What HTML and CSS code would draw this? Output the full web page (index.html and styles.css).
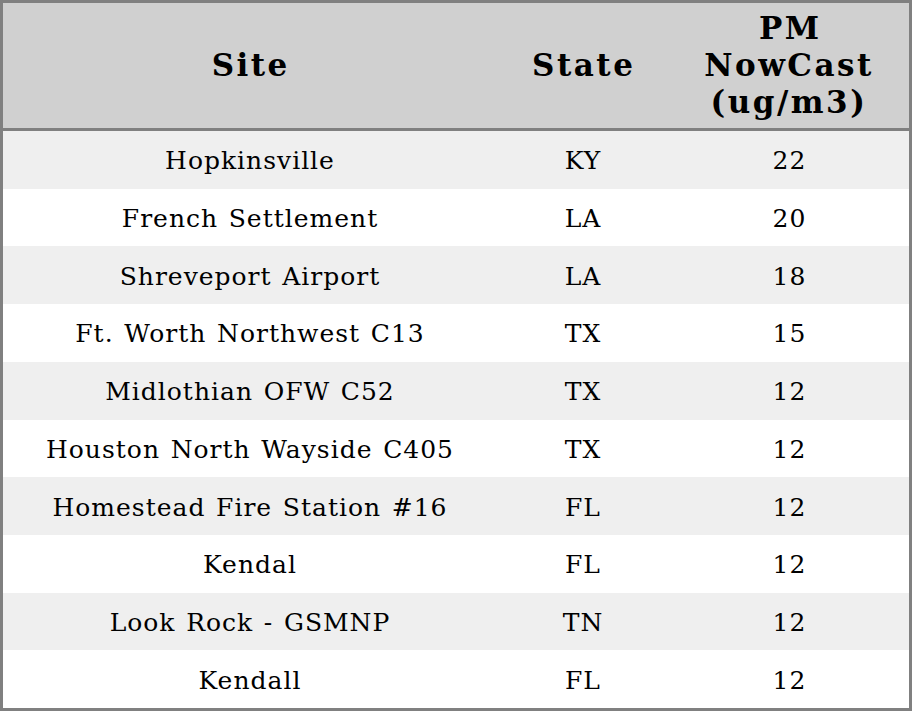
FILE: index.html
```html
<!DOCTYPE html>
<html>
<head>
<meta charset="utf-8">
<link rel="stylesheet" href="styles.css">
</head>
<body>
<div class="table">
  <div class="cell head">Site</div>
  <div class="cell head">State</div>
  <div class="cell head">PM<br>NowCast<br>(ug/m3)</div>

  <div class="cell odd">Hopkinsville</div><div class="cell odd">KY</div><div class="cell odd">22</div>
  <div class="cell">French Settlement</div><div class="cell">LA</div><div class="cell">20</div>
  <div class="cell odd">Shreveport Airport</div><div class="cell odd">LA</div><div class="cell odd">18</div>
  <div class="cell">Ft. Worth Northwest C13</div><div class="cell">TX</div><div class="cell">15</div>
  <div class="cell odd">Midlothian OFW C52</div><div class="cell odd">TX</div><div class="cell odd">12</div>
  <div class="cell">Houston North Wayside C405</div><div class="cell">TX</div><div class="cell">12</div>
  <div class="cell odd">Homestead Fire Station #16</div><div class="cell odd">FL</div><div class="cell odd">12</div>
  <div class="cell">Kendal</div><div class="cell">FL</div><div class="cell">12</div>
  <div class="cell odd">Look Rock - GSMNP</div><div class="cell odd">TN</div><div class="cell odd">12</div>
  <div class="cell">Kendall</div><div class="cell">FL</div><div class="cell">12</div>
</div>
</body>
</html>
```
FILE: styles.css
```css
html, body {
  margin: 0;
  padding: 0;
  background: #ffffff;
}
.table {
  box-sizing: border-box;
  width: 912px;
  height: 711px;
  border: 3px solid #808080;
  display: grid;
  grid-template-columns: 493px 173px 1fr;
  grid-template-rows: 128px repeat(10, 1fr);
  font-family: "DejaVu Serif", serif;
  color: #000;
}
.cell {
  display: flex;
  align-items: center;
  justify-content: center;
  text-align: center;
  font-size: 25px;
  letter-spacing: 1px;
  word-spacing: 1.7px;
  text-indent: 1px;
  padding-top: 2px;
  background: #ffffff;
}
.cell.odd {
  background: #efefef;
}
.cell.head {
  background: #d0d0d0;
  font-weight: bold;
  font-size: 31px;
  letter-spacing: 2.5px;
  text-indent: 2.5px;
  line-height: 37px;
  padding-top: 0;
  border-bottom: 3px solid #808080;
}
```
